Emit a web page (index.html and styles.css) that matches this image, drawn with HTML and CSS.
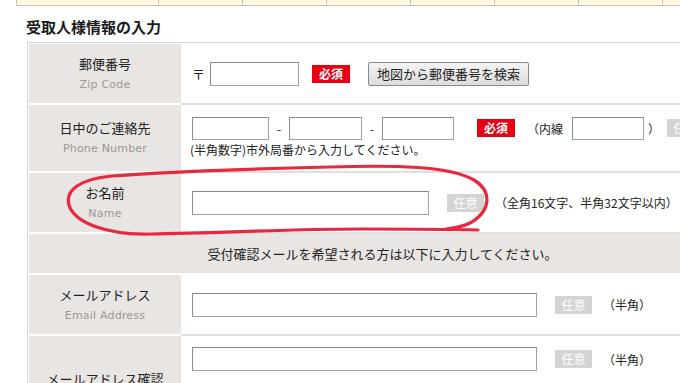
FILE: index.html
```html
<!DOCTYPE html>
<html lang="ja">
<head>
<meta charset="utf-8">
<title>受取人様情報の入力</title>
<link rel="stylesheet" href="styles.css">
</head>
<body>
<div class="topbar">
  <div class="tc first"></div><div class="tc"></div><div class="tc"></div><div class="tc"></div><div class="tc"></div><div class="tc"></div><div class="tc"></div>
</div>
<h2 class="heading">受取人様情報の入力</h2>
<div class="form">
  <div class="row r1">
    <div class="label"><div class="jp">郵便番号</div><div class="en">Zip Code</div></div>
    <div class="value">
      <div class="line">
        <span class="zip">〒</span>
        <input class="inp w88" type="text">
        <span class="badge req m13">必須</span>
        <button class="btn" type="button">地図から郵便番号を検索</button>
      </div>
    </div>
  </div>
  <div class="row r2">
    <div class="label"><div class="jp">日中のご連絡先</div><div class="en">Phone Number</div></div>
    <div class="value">
      <div class="line">
        <input class="inp tel w77" type="text"><span class="dash">-</span><input class="inp tel w73" type="text"><span class="dash">-</span><input class="inp tel w72" type="text">
        <span class="badge req m23">必須</span>
        <span class="txt m12">（内線</span>
        <input class="inp tel w72 m9" type="text">
        <span class="txt m4">）</span>
        <span class="badge opt m7">任意</span>
      </div>
      <div class="note">(半角数字)市外局番から入力してください。</div>
    </div>
  </div>
  <div class="row r3">
    <div class="label"><div class="jp">お名前</div><div class="en">Name</div></div>
    <div class="value">
      <div class="line">
        <input class="inp w236" type="text">
        <span class="badge opt m18">任意</span>
        <span class="txt m6">（全角16文字、半角32文字以内）</span>
      </div>
    </div>
  </div>
  <div class="row notice">受付確認メールを希望される方は以下に入力してください。</div>
  <div class="row r5">
    <div class="label"><div class="jp">メールアドレス</div><div class="en">Email Address</div></div>
    <div class="value">
      <div class="line">
        <input class="inp w344" type="text">
        <span class="badge opt m18">任意</span>
        <span class="txt m10">（半角）</span>
      </div>
    </div>
  </div>
  <div class="row r6">
    <div class="label"><div class="jp">メールアドレス確認</div></div>
    <div class="value top">
      <div class="line">
        <input class="inp w344" type="text">
        <span class="badge opt m18">任意</span>
        <span class="txt m10">（半角）</span>
      </div>
    </div>
  </div>
</div>
<svg class="mark" width="680" height="383" viewBox="0 0 680 383" xmlns="http://www.w3.org/2000/svg">
  <path d="M478 230 C440 229 400 229 360 229 C290 229 220 233 150 234 C105 235 74 222 69 205 C65 190 80 179 112 176 C180 171 250 169 330 167 C395 165 450 166 474 180 C492 191 491 210 472 222 C463 227 455 228 446 229" fill="none" stroke="#e8283f" stroke-width="3.2" stroke-linecap="round" stroke-linejoin="round"/>
</svg>
</body>
</html>
```
FILE: styles.css
```css
* { box-sizing: border-box; }
body {
  margin: 0;
  width: 680px;
  height: 383px;
  overflow: hidden;
  position: relative;
  background: #fff;
  color: #222;
  font-family: "Noto Sans CJK JP", "Noto Sans", sans-serif;
  font-size: 13px;
}
.topbar {
  display: flex;
  margin-left: 16px;
  height: 6px;
  background: #fdf8de;
  border-left: 1px solid #c9c4b0;
  border-bottom: 1px solid #c9c4b0;
  width: 720px;
}
.tc { flex: 0 0 84px; border-right: 1px solid #c9c4b0; }
.tc.first { flex-basis: 142px; }
.heading {
  margin: 11px 0 5px 26px;
  font-size: 15px;
  line-height: 20px;
  font-weight: bold;
  color: #1a1a1a;
}
.form {
  margin-left: 27px;
  width: 710px;
  border-top: 1px solid #d4d4d4;
  border-left: 1px solid #d4d4d4;
  padding-top: 1px;
}
.row { display: flex; }
.r1 { height: 61px; }
.r2 { height: 68px; }
.r3 { height: 61px; }
.r5 { height: 61px; }
.r6 { height: 86px; }
.label {
  width: 152px;
  margin-left: 1px;
  background: #e9e5e2;
  border-bottom: 2px solid #fff;
  display: flex;
  flex-direction: column;
  align-items: center;
  justify-content: center;
}
.jp { font-size: 13px; line-height: 21px; color: #222; }
.en {
  font-family: "DejaVu Sans", sans-serif;
  font-size: 11px;
  line-height: 21px;
  color: #9c9896;
  letter-spacing: 0.2px;
}
.value {
  flex: 1;
  padding-left: 11px;
  border-bottom: 2px solid #e0e0e0;
  display: flex;
  flex-direction: column;
  justify-content: center;
}
.value.top { justify-content: flex-start; padding-top: 11px; }
.line { display: flex; align-items: center; height: 24px; }
.note { font-size: 12px; line-height: 20px; color: #222; margin-left: -2px; }
.notice {
  height: 41px;
  margin-left: 1px;
  background: #e9e5e2;
  border-bottom: 2px solid #fff;
  justify-content: center;
  align-items: center;
  font-size: 13px;
  color: #222;
  padding-right: 1px;
}
.inp {
  height: 24px;
  border: 1px solid #a2a2a2;
  border-top-color: #888;
  border-left-color: #8e8e8e;
  background: #fff;
  margin: 0;
  padding: 0;
  font: inherit;
}
.inp.tel { height: 23px; }
.w88 { width: 89px; margin-left: 5px; }
.w77 { width: 77px; }
.w73 { width: 73px; }
.w72 { width: 72px; }
.w236 { width: 237px; }
.w344 { width: 345px; }
.zip { font-size: 13px; width: 13px; }
.dash { margin: 0 7px; font-size: 12px; width: 6px; text-align: center; }
.badge {
  display: inline-block;
  width: 38px;
  height: 18px;
  line-height: 18px;
  text-align: center;
  font-size: 12px;
  font-weight: bold;
  color: #fff;
}
.req { background: #e60012; }
.opt { background: #d4d4d4; width: 37px; font-weight: normal; }
.btn {
  margin-left: 18px;
  height: 24px;
  padding: 0 8px;
  font: inherit;
  font-size: 13px;
  color: #222;
  border: 1px solid #8a8a8a;
  border-radius: 2px;
  background: linear-gradient(#f4f4f4, #dcdcdc);
}
.txt { font-size: 12px; white-space: nowrap; color: #222; }
.m4 { margin-left: 4px; }
.m6 { margin-left: 11px; }
.m7 { margin-left: 7px; }
.m9 { margin-left: 9px; }
.m10 { margin-left: 11px; }
.m12 { margin-left: 12px; }
.m13 { margin-left: 13px; }
.m18 { margin-left: 18px; }
.m23 { margin-left: 23px; }
.mark { position: absolute; left: 0; top: 0; pointer-events: none; }
```
